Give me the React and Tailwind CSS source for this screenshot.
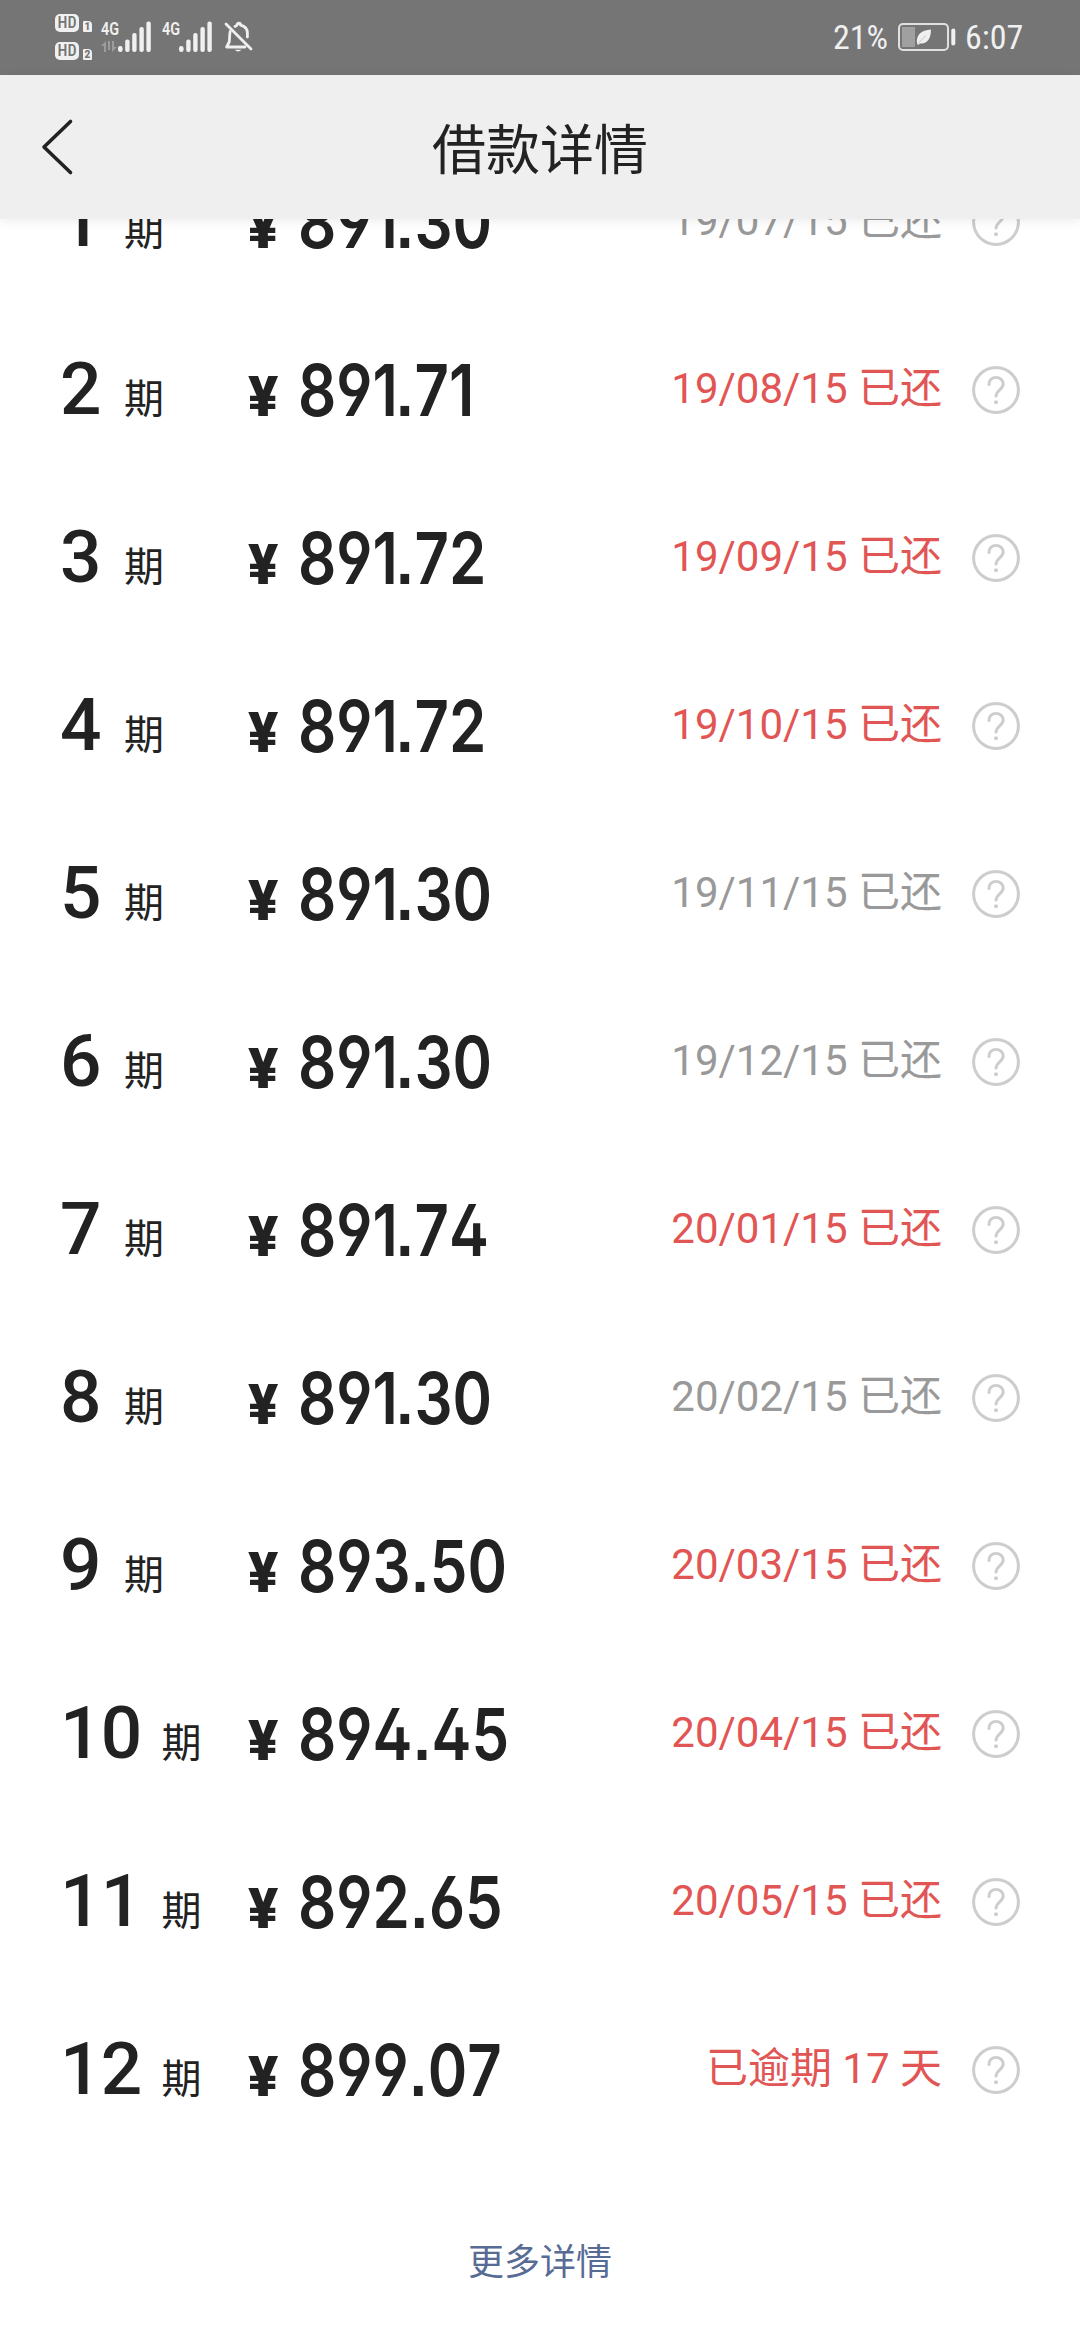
const installments = [
  { term: 1, amount: "891.30", status: "19/07/15 已还" },
  { term: 2, amount: "891.71", status: "19/08/15 已还", late: true },
  { term: 3, amount: "891.72", status: "19/09/15 已还", late: true },
  { term: 4, amount: "891.72", status: "19/10/15 已还", late: true },
  { term: 5, amount: "891.30", status: "19/11/15 已还" },
  { term: 6, amount: "891.30", status: "19/12/15 已还" },
  { term: 7, amount: "891.74", status: "20/01/15 已还", late: true },
  { term: 8, amount: "891.30", status: "20/02/15 已还" },
  { term: 9, amount: "893.50", status: "20/03/15 已还", late: true },
  { term: 10, amount: "894.45", status: "20/04/15 已还", late: true },
  { term: 11, amount: "892.65", status: "20/05/15 已还", late: true },
  { term: 12, amount: "899.07", status: "已逾期 17 天", late: true },
];

const HdBadge = ({ sim }) => (
  <div className="flex items-end gap-1">
    <span className="w-6 h-[18px] rounded-[5px] bg-[#f0f0f0] text-[#757575] text-[16px] leading-[18px] font-medium font-['Roboto_Condensed','Roboto'] flex items-center justify-center">
      HD
    </span>
    <span className="w-[9px] h-[11px] rounded-[1px] rounded-tr-[4px] bg-[#f0f0f0] text-[#757575] text-[10px] leading-[11px] font-black text-center">
      {sim}
    </span>
  </div>
);

const Signal = ({ data }) => (
  <svg className="overflow-visible" width="50" height="34" viewBox="0 0 50 34" fill="#f0f0f0">
    <text x="0" y="15" fontSize="19" fontWeight="600" textLength="18" lengthAdjust="spacingAndGlyphs">4G</text>
    {data && <path d="M5 32V21L0 26h3v6zM7 21v9h2v-9zM11 21v11l5-5h-3v-6z" fill="#9c9c9c" />}
    <rect x="17" y="26" width="4.6" height="6" rx="2.2" />
    <rect x="24.2" y="19.5" width="4.4" height="12.5" rx="2" />
    <rect x="31.2" y="13" width="4.4" height="19" rx="2" />
    <rect x="38.4" y="7" width="4.4" height="25" rx="2" />
    <rect x="45.4" y="1.5" width="4.4" height="30.5" rx="2" />
  </svg>
);

const StatusBar = () => (
  <div className="h-[75px] pb-[2px] shrink-0 bg-[#757575] text-[#f0f0f0] flex items-center justify-between pl-[55px] pr-[57px]">
    <div className="flex items-center">
      <div className="flex flex-col gap-[10px] w-[46px]">
        <HdBadge sim="1" />
        <HdBadge sim="2" />
      </div>
      <div className="flex gap-[11px]">
        <Signal data />
        <Signal />
      </div>
      <svg className="ml-[12px]" width="30" height="32" viewBox="0 0 30 32" fill="none" stroke="#f0f0f0" strokeWidth="2.8" strokeLinecap="round" strokeLinejoin="round">
        <path d="M2 3l25 25" />
        <path d="M11 5.500c.6-.6 1.200-1 2-1.300 0-2.600 3.600-2.600 3.600 0C21 5.400 23.400 8.500 23.400 12v4M6.200 10.500C5.400 13 5.800 17 5.200 21L2.600 26H21" />
        <path d="M11 28.800a3.300 2.600 0 0 0 6.200 0z" fill="#f0f0f0" stroke="none" />
      </svg>
    </div>
    <div className="flex items-center">
      <span className="w-[65px] text-[34px] leading-none font-['Roboto_Condensed','Roboto'] whitespace-nowrap">21%</span>
      <svg width="58" height="28" viewBox="0 0 58 28" fill="none">
        <rect x="1" y="1" width="49" height="26" rx="4" stroke="#e0e0e0" strokeWidth="2" />
        <rect x="4" y="4" width="13" height="20" fill="#a0a0a0" />
        <path d="M19 20.500c-1-9 4-13 14-14 0 9-4 15-11 14l-2 1.500z" fill="#f0f0f0" />
        <path d="M20 20.500l8-8" stroke="#c4c4c4" strokeWidth="1" />
        <rect x="53.300" y="5.500" width="4" height="17" rx="2" fill="#f0f0f0" />
      </svg>
      <span className="ml-[9px] w-[58px] text-[34px] leading-none font-['Roboto_Condensed','Roboto'] whitespace-nowrap">6:07</span>
    </div>
  </div>
);

const Header = () => (
  <header className="relative z-10 h-[144px] shrink-0 bg-[#efefef] shadow-[0_2px_10px_rgba(0,0,0,0.08)] flex items-center px-10">
    <svg width="34" height="58" viewBox="0 0 34 58" fill="none" stroke="#222" strokeWidth="3.600" strokeLinecap="round" strokeLinejoin="round">
      <path d="M30.500 3.500L4 29l26.500 25.500" />
    </svg>
    <h1 className="flex-1 text-center text-[54px] leading-none pr-[34px] pt-[9px]">借款详情</h1>
  </header>
);

const HelpIcon = () => (
  <svg width="48" height="48" viewBox="0 0 48 48" fill="none" stroke="#cdcdcd" strokeWidth="3" strokeLinecap="round">
    <circle cx="24" cy="24" r="22.400" />
    <path d="M17 18.500c0-4.500 3-7 7-7s7.200 2.800 7.200 6.500c0 5.500-7.200 6.500-7.200 12" />
    <circle cx="24" cy="36.200" r="2" fill="#cdcdcd" stroke="none" />
  </svg>
);

const InstallmentRow = ({ term, amount, status, late }) => (
  <li className="h-[168px] shrink-0 flex items-center px-[60px]">
    <div className="w-[188px] flex items-baseline gap-5 -translate-y-px">
      <span className="min-w-[44px] text-[73px] leading-none font-medium tracking-[-0.8px]">{term}</span>
      <span className="text-[40px] leading-none -translate-y-px">期</span>
    </div>
    <div className="flex-1 flex items-baseline">
      <span className="w-[50px] text-[56px] leading-none font-black">¥</span>
      <span className="inline-block origin-left scale-x-[.832] text-[72px] leading-none font-semibold font-['Inter'] [font-feature-settings:'cv03','cv04','cv02','ss07'] [font-kerning:none]">
        {/* the digit 1 is set a little tighter than the others */}
        {amount.split("").map((c, i) => (
          <span key={i} className={c === "1" ? "tracking-[-3px]" : ""}>{c}</span>
        ))}
      </span>
    </div>
    <span className={`text-[42px] leading-none whitespace-nowrap mr-[30px] -translate-y-px ${late ? "text-[#e15554]" : "text-[#999999]"}`}>
      {status}
    </span>
    <HelpIcon />
  </li>
);

const App = () => {
  return (
    <div className="w-[1080px] h-[2340px] overflow-hidden bg-white text-[#222222] flex flex-col font-['Roboto','Noto_Sans_CJK_SC',sans-serif]">
      <StatusBar />
      <Header />
      {/* list is scrolled half a row under the header */}
      <ul className="-mt-[81px] flex flex-col">
        {installments.map((item) => (
          <InstallmentRow key={item.term} {...item} />
        ))}
      </ul>
      <div className="pt-[91px] text-center text-[36px] leading-none text-[#576b95]">更多详情</div>
    </div>
  );
};

export default App;
